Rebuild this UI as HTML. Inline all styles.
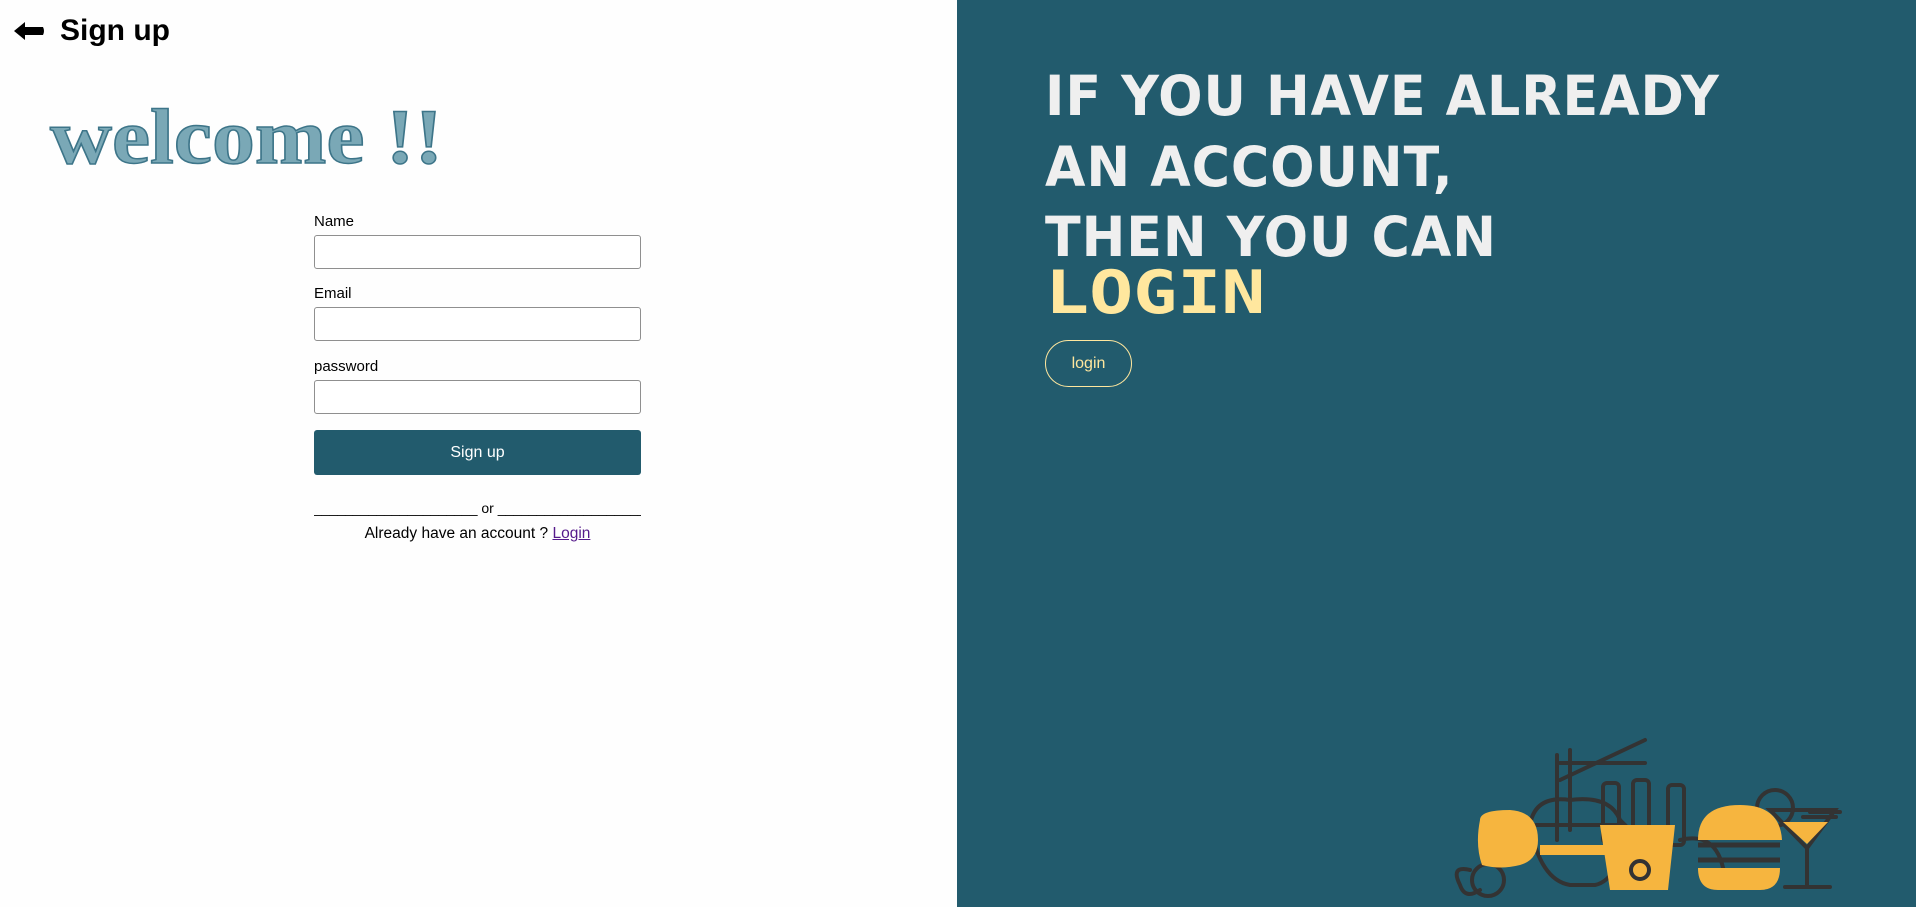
<!DOCTYPE html>
<html><head><meta charset="utf-8"><style>
*{margin:0;padding:0;box-sizing:border-box}
html,body{width:1916px;height:907px;overflow:hidden}
body{font-family:"Liberation Sans",Arial,sans-serif;background:#fff;position:relative}
.left{position:absolute;left:0;top:0;width:957px;height:907px;background:#fefefe}
.right{position:absolute;left:957px;top:0;width:959px;height:907px;background:#225b6d}
.back{position:absolute;left:12px;top:14px;font-weight:bold;font-size:30px;color:#000;display:flex;align-items:center}
.welcome{position:absolute;left:50px;top:92px;font-family:"Liberation Serif",serif;font-weight:bold;font-size:78px;color:#7aa8b6;letter-spacing:0px;-webkit-text-stroke:1.5px #3d7589;transform:scaleX(1.1);transform-origin:left;white-space:nowrap}
.form{position:absolute;left:314px;top:0;width:327px;font-size:15px;color:#000}
label{position:absolute;left:0}
.in{position:absolute;left:0;width:327px;height:34px;border:1px solid #8f8f8f;border-radius:3px;background:#fff}
.btn{position:absolute;left:0;top:430px;width:327px;height:45px;background:#225b6d;border-radius:3px;color:#fff;font-size:16px;display:flex;align-items:center;justify-content:center}
.or{position:absolute;left:0;top:500px;width:327px;text-align:center;font-size:14px;white-space:nowrap;overflow:hidden}
.al{position:absolute;left:0;top:525px;width:327px;text-align:center;font-size:15.5px}
.al a{color:#551a8b;text-decoration:underline}
.h{position:absolute;left:1045px;font-family:"DejaVu Sans","Liberation Sans",sans-serif;font-weight:bold;color:#efefef;font-size:55px;letter-spacing:1px;white-space:nowrap;transform:scaleX(0.95);transform-origin:left}
.lg{position:absolute;left:1045px;top:258px;font-family:"DejaVu Sans Mono",monospace;font-weight:bold;color:#ffe79e;font-size:60px;letter-spacing:0px;transform:scaleX(1.22);transform-origin:left}
.lbtn{position:absolute;left:1045px;top:340px;width:87px;height:47px;border:1px solid #ffe79e;border-radius:24px;color:#ffe79e;font-size:16px;display:flex;align-items:center;justify-content:center}
</style></head><body>
<div class="left">
<div class="back"><svg width="34" height="22" viewBox="0 0 34 22"><path d="M2 11 L13 2 L13 7 L31 7 Q33 11 31 15 L13 15 L13 20 Z" fill="#000"/></svg><span style="margin-left:14px">Sign up</span></div>
<div class="welcome">welcome !!</div>
<div class="form">
<label style="top:213px">Name</label><div class="in" style="top:235px"></div>
<label style="top:285px">Email</label><div class="in" style="top:307px"></div>
<label style="top:358px">password</label><div class="in" style="top:380px"></div>
<div class="btn">Sign up</div>
<div class="or">_____________________ or _____________________</div>
<div class="al">Already have an account ? <a>Login</a></div>
</div>
</div>
<div class="right"></div>
<div class="h" style="top:64px">IF YOU HAVE ALREADY</div>
<div class="h" style="top:135px">AN ACCOUNT,</div>
<div class="h" style="top:205px">THEN YOU CAN</div>
<div class="lg">LOGIN</div>
<div class="lbtn">login</div>
<svg style="position:absolute;left:1420px;top:720px" width="440" height="187" viewBox="0 0 440 187">
<g stroke="#333" stroke-width="4" fill="none" stroke-linecap="round">
<path d="M140 60 L225 20 M140 43 L225 43 M137 35 L137 120 M150 30 L150 110"/>
<path d="M110 105 Q115 75 150 80 Q190 75 200 100 L205 105 L110 105 M110 105 Q120 160 150 165 L175 165 Q200 160 205 105"/>
<rect x="183" y="63" width="16" height="60" rx="4"/><rect x="213" y="60" width="16" height="70" rx="4"/><rect x="248" y="65" width="16" height="60" rx="4"/>
<path d="M260 120 Q300 110 305 160"/>
<path d="M383 97 L416 97 M390 92 L420 92 M350 90 L415 90 L387 128 Z M387 128 L387 165 M365 167 L410 167"/>
<circle cx="355" cy="88" r="18"/>
<circle cx="68" cy="160" r="16"/><path d="M50 150 Q30 145 40 165 Q45 180 60 170"/>
</g>
<path d="M60 100 Q60 90 90 90 Q118 92 118 120 Q118 140 100 145 Q80 150 62 145 Q55 125 60 100 Z" fill="#f6b53f"/>
<rect x="120" y="125" width="65" height="10" fill="#f6b53f"/>
<path d="M180 105 L255 105 L248 170 L190 170 Z" fill="#f6b53f"/>
<circle cx="220" cy="150" r="9" fill="none" stroke="#333" stroke-width="4"/>
<path d="M278 120 Q278 85 320 85 Q360 85 362 120 Z" fill="#f6b53f"/>
<path d="M278 148 L360 148 Q360 170 340 170 L298 170 Q278 170 278 148 Z" fill="#f6b53f"/>
<path d="M278 125 L360 125 M278 140 L360 140" stroke="#333" stroke-width="5"/>
<path d="M363 102 L408 102 L387 124 Z" fill="#f6b53f"/>
</svg>
</body></html>
